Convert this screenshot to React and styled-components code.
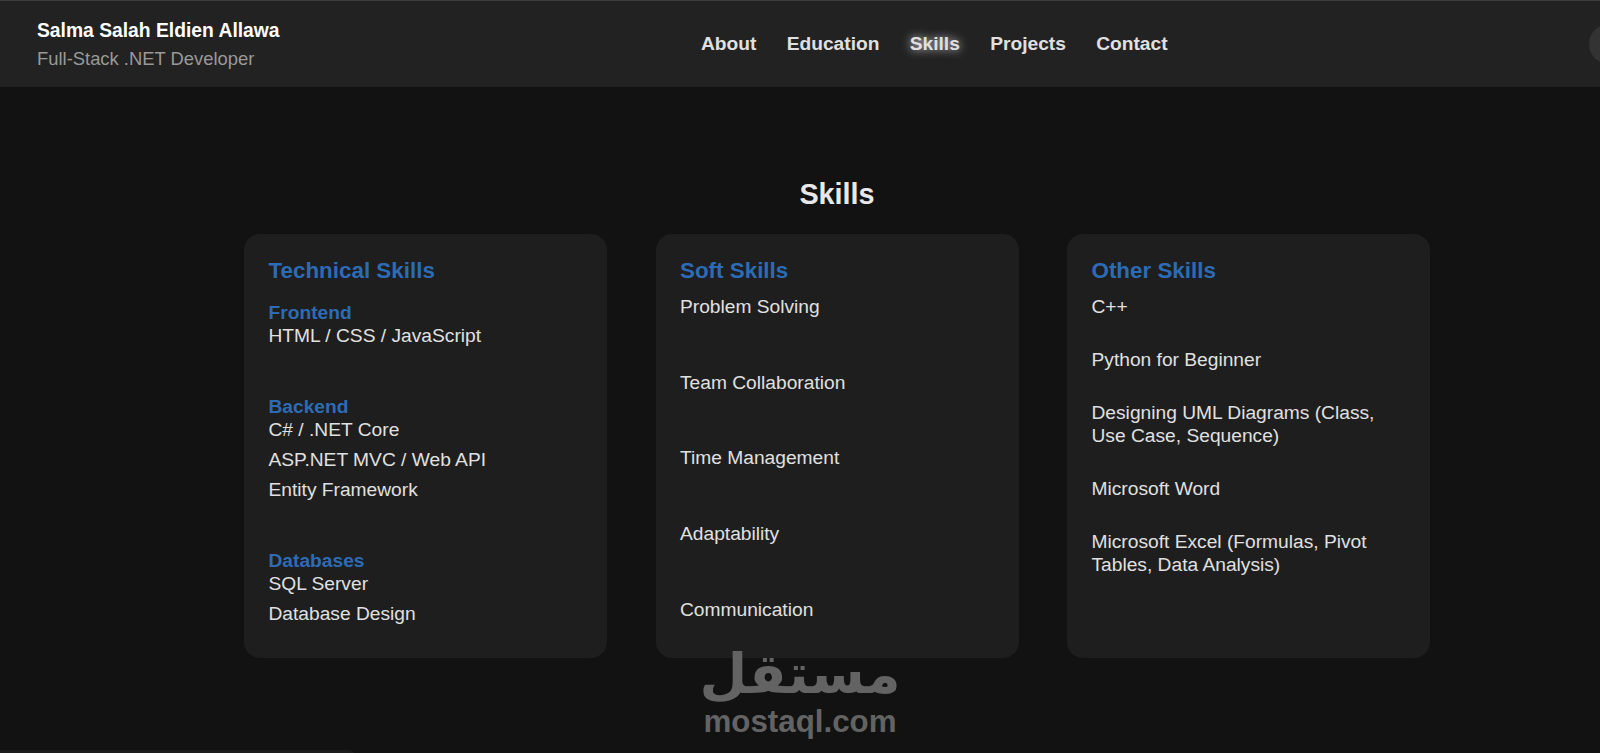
import React from "react";
import styled, { createGlobalStyle } from "styled-components";

const GlobalStyle = createGlobalStyle`
  html, body {
    margin: 0;
    height: 100%;
    overflow: hidden;
    background-color: #121212;
  }
  body {
    font-family: "Liberation Sans", Arial, sans-serif;
    color: #e0e0e0;
  }
`;

const Page = styled.div`
  position: relative;
  width: 1674px;
`;

const Navbar = styled.header`
  display: flex;
  align-items: center;
  justify-content: space-between;
  box-sizing: border-box;
  height: 87px;
  padding: 0 37px;
  background-color: #222222;
  border-top: 1px solid #3c3c3c;
`;

const Brand = styled.div`
  display: flex;
  flex-direction: column;
  gap: 6.5px;
  margin-top: 2px;
`;

const BrandName = styled.span`
  font-size: 19.3px;
  line-height: 22px;
  font-weight: 700;
  color: #ffffff;
`;

const BrandRole = styled.span`
  font-size: 18.4px;
  line-height: 22px;
  color: #999999;
`;

const NavLinks = styled.nav`
  display: flex;
  gap: 30.3px;
`;

const NavLink = styled.a`
  font-size: 19.2px;
  line-height: 22px;
  font-weight: 700;
  color: #e0e0e0;
  text-shadow: ${(props) =>
    props.$active ? "0 0 10px rgba(255, 255, 255, 0.85)" : "none"};
`;

const ThemeToggle = styled.div`
  width: 48px;
  height: 40px;
  border-radius: 20px;
  background-color: #333333;
`;

const SkillsSection = styled.section`
  padding-top: 91px;
`;

const SectionTitle = styled.h2`
  margin: 0 0 23px;
  font-size: 28.8px;
  line-height: 33px;
  font-weight: 700;
  text-align: center;
  color: #e8e8e8;
`;

const CardGrid = styled.div`
  display: grid;
  grid-template-columns: repeat(3, 363px);
  gap: 48.5px;
  justify-content: center;
`;

const Card = styled.article`
  box-sizing: border-box;
  height: 424px;
  padding: 24px 24.5px 32px;
  border-radius: 16px;
  background-color: #1e1e1e;
`;

const CardTitle = styled.h3`
  margin: 0 0 11px;
  font-size: 22.4px;
  line-height: 26px;
  font-weight: 700;
  color: #2d6cb5;
`;

const SkillList = styled.ul`
  display: flex;
  flex-direction: column;
  gap: ${(props) => props.$gap}px;
  margin: 0;
  padding: 0;
  list-style: none;
`;

const SkillItem = styled.li`
  font-size: 19.2px;
  line-height: 23px;
  color: #e0e0e0;
`;

const GroupStack = styled.div`
  display: flex;
  flex-direction: column;
  gap: 48px;
  padding-top: 6px;
`;

const GroupTitle = styled.h4`
  margin: 0;
  font-size: 19.2px;
  line-height: 23px;
  font-weight: 700;
  color: #2d6cb5;
`;

const NextSection = styled.div`
  width: 356px;
  height: 40px;
  margin-top: 92px;
  border-radius: 0 8px 0 0;
  background-color: #1c1c1c;
`;

const Watermark = styled.div`
  position: absolute;
  left: 690px;
  top: 642px;
  width: 220px;
  text-align: center;
  color: #636363;
  font-weight: 700;
  pointer-events: none;
`;

const WatermarkArabic = styled.div`
  font-family: "DejaVu Sans", sans-serif;
  font-size: 55px;
  line-height: 64px;
`;

const WatermarkLatin = styled.div`
  font-family: "Liberation Sans", Arial, sans-serif;
  font-size: 31.3px;
  line-height: 32px;
`;

const technical = [
  { title: "Frontend", items: ["HTML / CSS / JavaScript"] },
  {
    title: "Backend",
    items: ["C# / .NET Core", "ASP.NET MVC / Web API", "Entity Framework"],
  },
  { title: "Databases", items: ["SQL Server", "Database Design"] },
];

const soft = [
  "Problem Solving",
  "Team Collaboration",
  "Time Management",
  "Adaptability",
  "Communication",
];

const other = [
  "C++",
  "Python for Beginner",
  "Designing UML Diagrams (Class, Use Case, Sequence)",
  "Microsoft Word",
  "Microsoft Excel (Formulas, Pivot Tables, Data Analysis)",
];

const links = ["About", "Education", "Skills", "Projects", "Contact"];

const App = () => {
  return (
    <Page>
      <GlobalStyle />
      <Navbar>
        <Brand>
          <BrandName>Salma Salah Eldien Allawa</BrandName>
          <BrandRole>Full-Stack .NET Developer</BrandRole>
        </Brand>
        <NavLinks>
          {links.map((link) => (
            <NavLink key={link} $active={link === "Skills"}>
              {link}
            </NavLink>
          ))}
        </NavLinks>
        <ThemeToggle />
      </Navbar>

      <SkillsSection>
        <SectionTitle>Skills</SectionTitle>
        <CardGrid>
          <Card>
            <CardTitle>Technical Skills</CardTitle>
            <GroupStack>
              {technical.map((group) => (
                <div key={group.title}>
                  <GroupTitle>{group.title}</GroupTitle>
                  <SkillList $gap={7}>
                    {group.items.map((item) => (
                      <SkillItem key={item}>{item}</SkillItem>
                    ))}
                  </SkillList>
                </div>
              ))}
            </GroupStack>
          </Card>
          <Card>
            <CardTitle>Soft Skills</CardTitle>
            <SkillList $gap={52.7}>
              {soft.map((item) => (
                <SkillItem key={item}>{item}</SkillItem>
              ))}
            </SkillList>
          </Card>
          <Card>
            <CardTitle>Other Skills</CardTitle>
            <SkillList $gap={30}>
              {other.map((item) => (
                <SkillItem key={item}>{item}</SkillItem>
              ))}
            </SkillList>
          </Card>
        </CardGrid>
      </SkillsSection>
      <NextSection />

      <Watermark>
        <WatermarkArabic dir="rtl">مستقل</WatermarkArabic>
        <WatermarkLatin>mostaql.com</WatermarkLatin>
      </Watermark>
    </Page>
  );
};

export default App;
